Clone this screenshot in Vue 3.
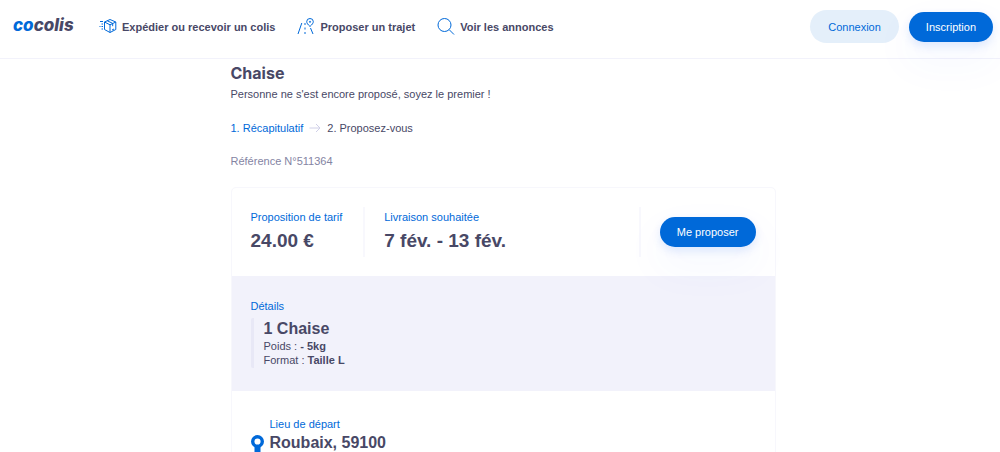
<script setup>
const navItems = [
  { label: 'Expédier ou recevoir un colis', icon: 'parcel' },
  { label: 'Proposer un trajet', icon: 'road' },
  { label: 'Voir les annonces', icon: 'search' },
]
</script>

<template>
  <div class="page">
    <header class="topbar">
      <a class="logo" href="#" aria-label="cocolis"><span class="logo-blue">co</span>colis</a>
      <nav class="nav">
        <a v-for="item in navItems" :key="item.icon" class="nav-link" href="#">
          <svg v-if="item.icon === 'parcel'" width="18" height="18" viewBox="0 0 18 18" aria-hidden="true">
            <path d="M11 1.500 16.800 4v7.500L11 14.500l-5.500-3V4zM5.500 4 11 6.800 16.800 4M11 6.800v7.700M8.300 2.800l5.400 2.600v2.800M13 12l2-1M1 3.500h3M2.500 6H4M0.500 8.500h1M2.500 8.500H4M2.500 11H4" />
          </svg>
          <svg v-else-if="item.icon === 'road'" width="18" height="18" viewBox="0 0 18 18" aria-hidden="true">
            <path d="M1 16 4.800 5M8 5v2M8 9.500v2M8 14v2M13.500 10l2.500 6M13 8.500C10.800 6.500 9.700 5 9.700 3.700a3.300 3.200 0 0 1 6.600 0C16.300 5 15.200 6.500 13 8.500z" />
            <circle cx="13" cy="3.800" r="0.600" />
          </svg>
          <svg v-else width="18" height="18" viewBox="0 0 18 18" aria-hidden="true">
            <circle cx="7.500" cy="7" r="6.500" />
            <path d="m12.200 11.700 4.800 4.800" />
          </svg>
          {{ item.label }}
        </a>
      </nav>
      <div class="account">
        <button class="btn btn-light" type="button">Connexion</button>
        <button class="btn btn-primary" type="button">Inscription</button>
      </div>
    </header>

    <main class="content">
      <h1>Chaise</h1>
      <p class="intro">Personne ne s'est encore proposé, soyez le premier !</p>
      <nav class="steps" aria-label="Étapes">
        <a href="#">1. Récapitulatif</a>
        <svg width="12" height="10" viewBox="0 0 12 10" aria-hidden="true">
          <path d="M0.500 5h10.500M7 1l4 4-4 4" />
        </svg>
        <span>2. Proposez-vous</span>
      </nav>
      <p class="reference">Référence N°511364</p>

      <article class="card">
        <section class="summary">
          <div class="price">
            <h2>Proposition de tarif</h2>
            <p class="figure">24.00 €</p>
          </div>
          <div class="dates">
            <h2>Livraison souhaitée</h2>
            <p class="figure">7 fév. - 13 fév.</p>
          </div>
          <div class="action">
            <button class="btn btn-primary" type="button">Me proposer</button>
          </div>
        </section>
        <section class="details">
          <h2>Détails</h2>
          <div class="item">
            <h3>1 Chaise</h3>
            <p>Poids : <strong>- 5kg</strong></p>
            <p>Format : <strong>Taille L</strong></p>
          </div>
        </section>
        <section class="departure">
          <svg class="pin" width="13" height="24" viewBox="0 0 13 24" aria-hidden="true">
            <circle cx="6.500" cy="6.500" r="4.800" stroke-width="3.400" />
            <path d="M6.500 11.500V24" stroke-width="6" />
          </svg>
          <div>
            <h2>Lieu de départ</h2>
            <h3>Roubaix, 59100</h3>
          </div>
        </section>
      </article>
    </main>
  </div>
</template>

<style>
body {
  margin: 0;
  background: #fff;
  overflow: hidden;
}
</style>

<style scoped>
.page {
  color: #484866;
  font: 11px/14px "Liberation Sans", Arial, sans-serif;
}
h1, h2, h3, p {
  margin: 0;
}
a {
  color: inherit;
  text-decoration: none;
}
svg {
  flex: none;
  fill: none;
  stroke: #0069d9;
}
.topbar {
  display: flex;
  align-items: center;
  padding: 10px 7px 15px 13px;
  border-bottom: 1px solid #f2f2fb;
}
.logo {
  width: 86px;
  padding-bottom: 4px;
  color: #484866;
  font: italic 800 17px/24px Inter, sans-serif;
}
.logo-blue {
  color: #0069d9;
}
.nav {
  display: flex;
  gap: 22px;
}
.nav-link {
  display: flex;
  align-items: center;
  gap: 5px;
  font-weight: bold;
  white-space: nowrap;
}
.account {
  display: flex;
  align-items: center;
  gap: 10px;
  margin-left: auto;
}
.btn {
  border: 0;
  border-radius: 17px;
  font: inherit;
  white-space: nowrap;
}
.btn-light {
  height: 33px;
  padding: 0 18px;
  background: #e4effa;
  color: #0069d9;
}
.btn-primary {
  height: 30px;
  padding: 0 17px;
  background: #0069d9;
  color: #fff;
  box-shadow: 0 4px 10px rgba(0, 80, 240, 0.12), 0 18px 40px 8px rgba(0, 80, 240, 0.03);
}
.content {
  max-width: 545px;
  margin: 0 auto;
  padding: 4px 0 0 6px;
}
h1 {
  font: 700 16px/20px Inter, sans-serif;
}
.intro {
  margin-top: 4px;
}
.steps {
  display: flex;
  align-items: center;
  gap: 6px;
  margin-top: 20px;
}
.steps a {
  color: #0069d9;
}
.steps svg {
  stroke: #d0d0e8;
}
.reference {
  margin-top: 19px;
  color: #8484a3;
}
.card {
  margin-top: 19px;
  border: 1px solid #f7f7fc;
  border-radius: 5px;
}
h2 {
  color: #0069d9;
  font: 11px/14px "Liberation Sans", Arial, sans-serif;
}
h3 {
  font: bold 16px/20px "Liberation Sans", Arial, sans-serif;
}
.summary {
  display: flex;
  padding: 19px;
}
.price,
.dates {
  padding: 3px 19px 2px 0;
  border-right: 2px solid #f8f8fd;
}
.price {
  padding-right: 21px;
}
.dates {
  flex: 1;
  padding-left: 19px;
}
.figure {
  margin-top: 3px;
  font-weight: bold;
  font-size: 19px;
  line-height: 28px;
}
.action {
  display: flex;
  align-items: center;
  padding-left: 19px;
}
.details {
  padding: 23px 19px;
  background: #f2f2fb;
}
.item {
  margin-top: 5px;
  padding: 1px 0 1px 10px;
  border-left: 3px solid #e8e8f6;
  border-radius: 2px;
}
.departure {
  display: flex;
  gap: 6px;
  padding: 26px 19px;
}
.departure h3 {
  margin-top: 2px;
}
.pin {
  margin-top: 18px;
}
</style>
